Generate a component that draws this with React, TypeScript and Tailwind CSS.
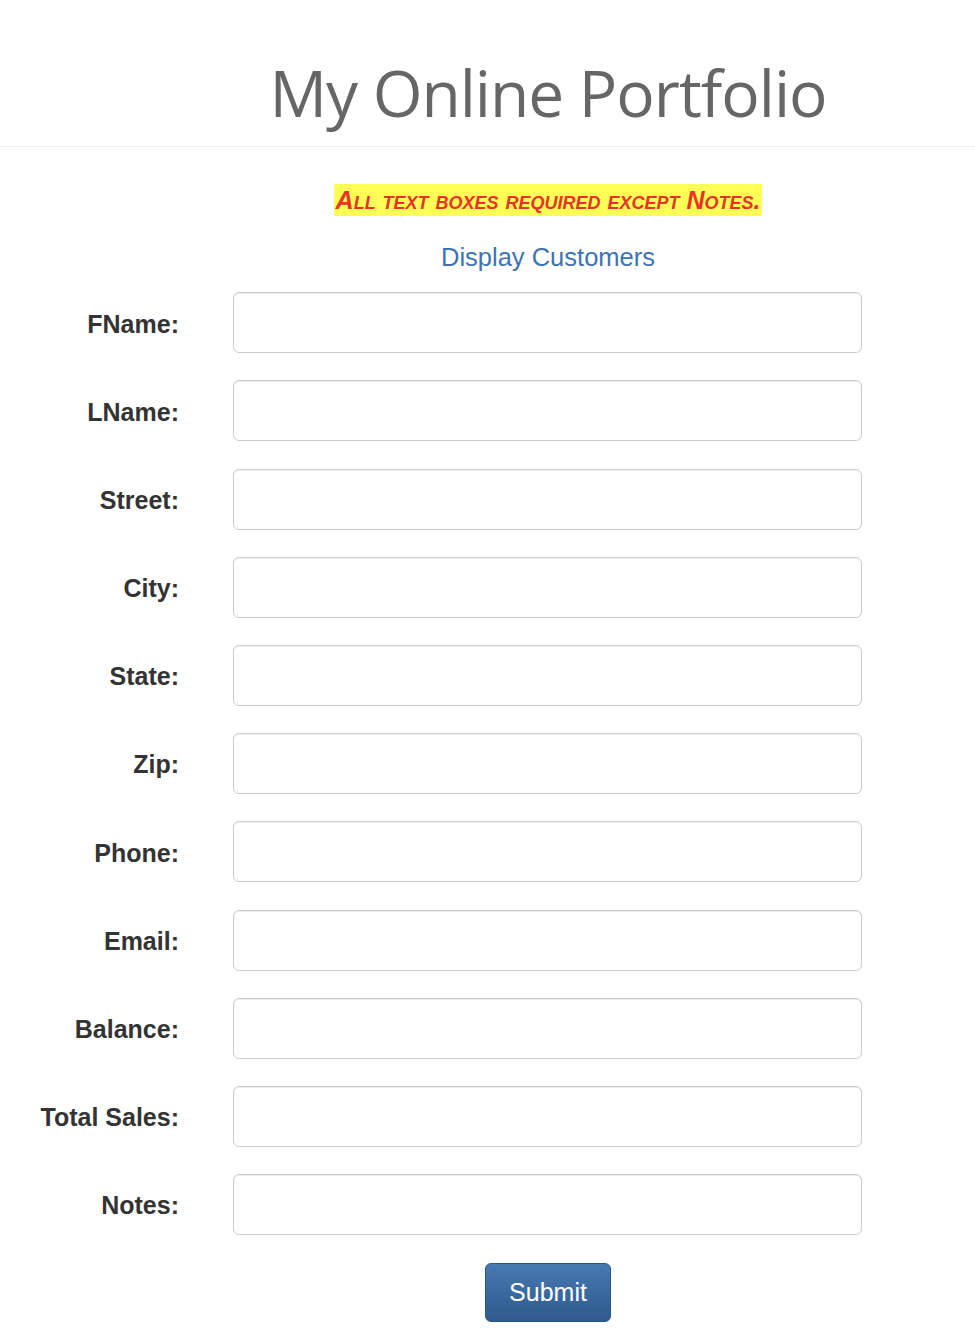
const fields = [
  "FName",
  "LName",
  "Street",
  "City",
  "State",
  "Zip",
  "Phone",
  "Email",
  "Balance",
  "Total Sales",
  "Notes",
];

export default function App() {
  return (
    <div className="min-h-[1340px] bg-white font-['Liberation_Sans',Arial,sans-serif] text-[#333]">
      {/* header */}
      <header className="border-b border-[#eee] h-[147px] pl-[121px] flex items-center justify-center">
        <h1 className="pt-[40px] text-[64px] tracking-[-1px] leading-none text-[#666] font-['Open_Sans',sans-serif]">
          My Online Portfolio
        </h1>
      </header>

      <div className="pl-[121px] text-center mt-[39px]">
        <span className="bg-[#ffff55] px-[2px] py-[2px] text-[25px] font-bold italic text-[#e8332a] [font-variant:small-caps] leading-[29px]">
          All text boxes required except Notes.
        </span>
      </div>

      <div className="pl-[121px] text-center mt-[22px]">
        <a href="#" className="text-[25.5px] text-[#3e73b2]">
          Display Customers
        </a>
      </div>

      {/* form */}
      <form
        className="mt-[16px] grid grid-cols-[179px_629px] gap-x-[54px] gap-y-[27.2px]"
        onSubmit={(e) => e.preventDefault()}
      >
        {fields.map((f) => (
          <div key={f} className="contents">
            <label className="text-right text-[25px] font-bold pt-[3px] self-center">
              {f}:
            </label>
            <input
              type="text"
              className="h-[61px] rounded-[6px] border border-[#ccc] bg-white shadow-[inset_0_1px_1px_rgba(0,0,0,0.075)] px-3 text-[20px] outline-none"
            />
          </div>
        ))}
      </form>

      <div className="pl-[121px] flex justify-center mt-[28px]">
        <button
          type="submit"
          className="w-[126px] h-[59px] rounded-[6px] border border-[#2b5481] bg-gradient-to-b from-[#477ab3] to-[#2f5a8c] text-white text-[25px]"
        >
          Submit
        </button>
      </div>
    </div>
  );
}
